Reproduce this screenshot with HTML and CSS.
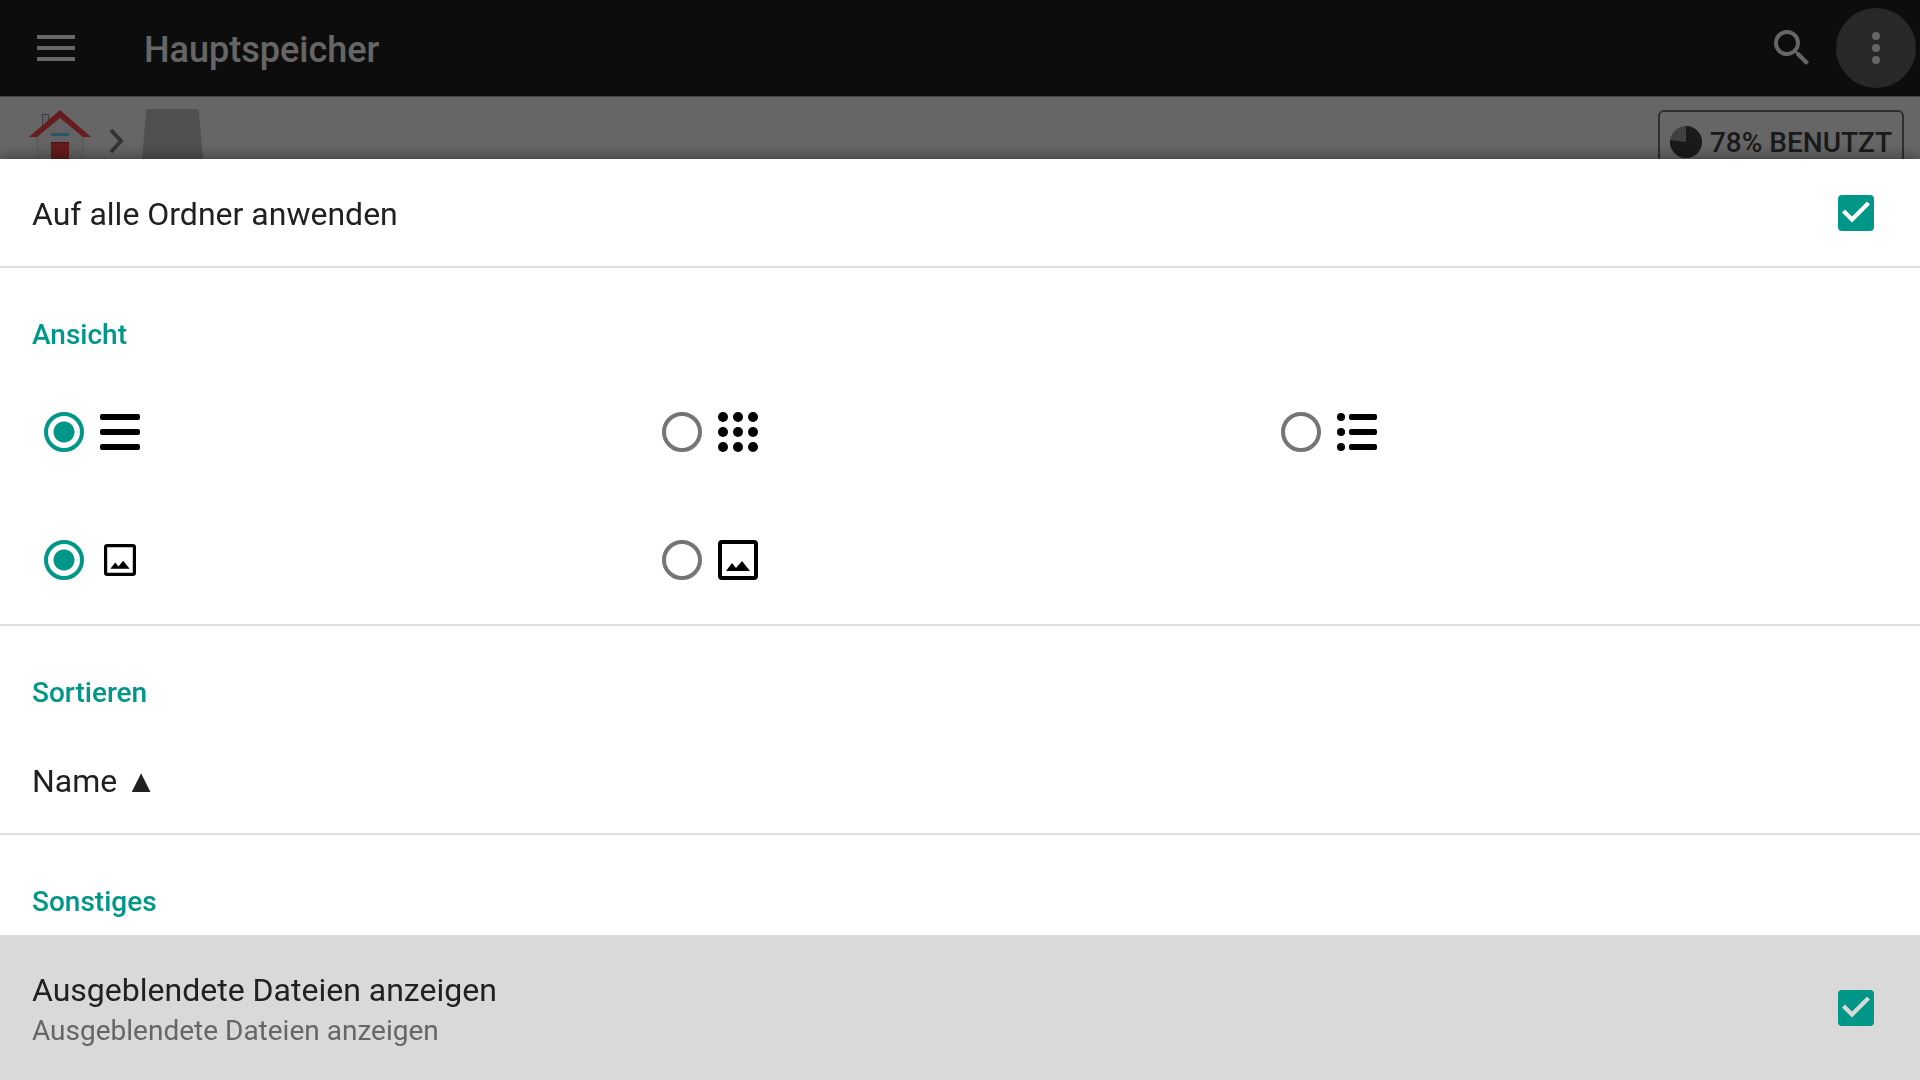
FILE: index.html
```
<!DOCTYPE html>
<html lang="de">
<head>
  <meta charset="utf-8">
  <title>Hauptspeicher</title>
  <link rel="stylesheet" href="styles.css">
</head>
<body>
  <header class="toolbar">
    <button class="icon-button menu-button" type="button" aria-label="Navigation">
      <svg width="38" height="26" viewBox="0 0 38 26"><path d="M0 0h38v4H0zM0 11h38v4H0zM0 22h38v4H0z"/></svg>
    </button>
    <h1>Hauptspeicher</h1>
    <button class="icon-button" type="button" aria-label="Suchen">
      <svg width="48" height="48" viewBox="0 0 24 24"><path d="M15.5 14h-.79l-.28-.27A6.47 6.47 0 0 0 16 9.5 6.5 6.5 0 1 0 9.5 16c1.61 0 3.09-.59 4.23-1.57l.27.28v.79l5 4.99L20.49 19l-4.99-5zm-6 0C7.01 14 5 11.99 5 9.5S7.01 5 9.5 5 14 7.01 14 9.5 11.99 14 9.5 14z"/></svg>
    </button>
    <button class="icon-button more-button" type="button" aria-label="Mehr">
      <svg width="48" height="48" viewBox="0 0 24 24"><circle cx="12" cy="6" r="2"/><circle cx="12" cy="12" r="2"/><circle cx="12" cy="18" r="2"/></svg>
    </button>
  </header>

  <nav class="path-bar">
    <a href="#" class="path-item" aria-label="Start">
      <svg width="64" height="64" viewBox="0 0 64 64">
        <path d="M14.5 20V5.500h6V16" fill="#f0f0f0" stroke="#999" />
        <path d="M9 27L32 8l23 19v37H9z" fill="#f7f7f7" stroke="#e2e2e2"/>
        <path d="M1 28L32 1l31 27h-8L32 9 9 28z" fill="#ff4646"/>
        <path d="M23 24h18v3H23z" fill="#64d8ff"/>
        <path d="M23 33h18v31H23z" fill="#ff4646"/>
        <path d="M23 33h18v1H23z" fill="#a03030"/>
      </svg>
    </a>
    <svg class="chevron" width="16" height="26" viewBox="0 0 16 26"><path d="M2 2l10 11L2 24" fill="none" stroke="#808080" stroke-width="4"/></svg>
    <a href="#" class="path-item" aria-label="Hauptspeicher">
      <svg width="64" height="64" viewBox="0 0 64 64"><path d="M0 64L5 3q0-3 3-3h47q3 0 3 3l5 61z" fill="#c8c8c8"/></svg>
    </a>
    <button class="usage-button" type="button">
      <svg width="32" height="32" viewBox="0 0 32 32"><circle cx="16" cy="16" r="16" fill="#a0a0a0"/><path d="M16 16V0a16 16 0 1 1-15.9 14z" fill="#424242"/></svg>
      78% BENUTZT
    </button>
  </nav>

  <div class="scrim">
    <form class="sheet">
      <label class="row">
        <span class="row-text">Auf alle Ordner anwenden</span>
        <input class="checkbox" type="checkbox" checked>
      </label>

      <section class="section">
        <h2>Ansicht</h2>
        <div class="options">
          <label class="option">
            <input type="radio" name="view" aria-label="Liste" checked>
            <svg width="40" height="40" viewBox="0 0 40 40"><rect y="2" width="40" height="6" rx="2"/><rect y="17" width="40" height="6" rx="2"/><rect y="32" width="40" height="6" rx="2"/></svg>
          </label>
          <label class="option">
            <input type="radio" name="view" aria-label="Raster">
            <svg width="40" height="40" viewBox="0 0 40 40">
              <circle cx="5" cy="5" r="5"/><circle cx="20" cy="5" r="5"/><circle cx="35" cy="5" r="5"/>
              <circle cx="5" cy="20" r="5"/><circle cx="20" cy="20" r="5"/><circle cx="35" cy="20" r="5"/>
              <circle cx="5" cy="35" r="5"/><circle cx="20" cy="35" r="5"/><circle cx="35" cy="35" r="5"/>
            </svg>
          </label>
          <label class="option">
            <input type="radio" name="view" aria-label="Details">
            <svg width="40" height="40" viewBox="0 0 40 40">
              <circle cx="4" cy="5" r="4"/><circle cx="4" cy="20" r="4"/><circle cx="4" cy="35" r="4"/>
              <rect x="12" y="2" width="28" height="6" rx="2"/><rect x="12" y="17" width="28" height="6" rx="2"/><rect x="12" y="32" width="28" height="6" rx="2"/>
            </svg>
          </label>
        </div>
        <div class="options">
          <label class="option">
            <input type="radio" name="size" aria-label="Klein" checked>
            <svg class="small" width="32" height="32" viewBox="0 0 40 40"><rect x="2" y="2" width="36" height="36" rx="2" fill="none" stroke="#000" stroke-width="4"/><path d="M8 31l6-8 4 5 6-7 8 10z"/></svg>
          </label>
          <label class="option">
            <input type="radio" name="size" aria-label="Groß">
            <svg width="40" height="40" viewBox="0 0 40 40"><rect x="2" y="2" width="36" height="36" rx="2" fill="none" stroke="#000" stroke-width="4"/><path d="M8 31l6-8 4 5 6-7 8 10z"/></svg>
          </label>
        </div>
      </section>

      <section class="section">
        <h2>Sortieren</h2>
        <button class="row" type="button">
          <span class="row-text">Name <span class="arrow">▲</span></span>
        </button>
      </section>

      <section class="section">
        <h2>Sonstiges</h2>
        <label class="row selected">
          <span class="row-text">Ausgeblendete Dateien anzeigen
            <small>Ausgeblendete Dateien anzeigen</small>
          </span>
          <input class="checkbox" type="checkbox" checked>
        </label>
      </section>
    </form>
  </div>
</body>
</html>
```
FILE: styles.css
```
* {
  box-sizing: border-box;
}
body {
  margin: 0;
  font-family: Roboto, sans-serif;
  color: #212121;
  background-color: #ffffff;
}
button {
  font-family: inherit;
  color: inherit;
  border: none;
  background: none;
  padding: 0;
  cursor: pointer;
}
svg {
  display: block;
  flex: none;
}

/* Toolbar */
.toolbar {
  display: flex;
  align-items: center;
  height: 96px;
  padding-right: 4px;
  background-color: #212121;
  color: #ffffff;
}
.toolbar h1 {
  flex: 1;
  margin: 0;
  padding-top: 4px;
  font-size: 36px;
  line-height: 44px;
  font-weight: 500;
}
.icon-button {
  display: flex;
  align-items: center;
  justify-content: center;
  width: 80px;
  height: 80px;
  margin-left: 4px;
  border-radius: 50%;
}
.icon-button svg {
  fill: #ffffff;
}
.menu-button {
  width: 112px;
  margin: 0 32px 0 0;
}
.more-button {
  background-color: #646464;
}

/* Path bar below the toolbar */
.path-bar {
  display: flex;
  align-items: flex-start;
  padding: 12px 16px 0 28px;
  border-top: 1px solid #b0b0b0;
}
.chevron {
  margin: 19px 16px 0 17px;
}
.usage-button {
  display: flex;
  align-items: center;
  gap: 8px;
  height: 64px;
  margin-top: 1px;
  margin-left: auto;
  padding: 0 10px;
  border: 2px solid #757575;
  border-radius: 6px;
  font-size: 28px;
  font-weight: 500;
  color: #424242;
}

/* Bottom sheet */
.scrim {
  position: fixed;
  inset: 0;
  display: flex;
  flex-direction: column;
  justify-content: flex-end;
  background-color: rgba(0, 0, 0, 0.6);
}
.sheet {
  background-color: #ffffff;
  box-shadow: 0 0 16px rgba(0, 0, 0, 0.5);
}
.row {
  display: flex;
  align-items: center;
  justify-content: space-between;
  width: 100%;
  padding: 33px 46px 33px 32px;
  text-align: left;
  cursor: pointer;
}
.row-text {
  padding-top: 3px;
  font-size: 32px;
  line-height: 38px;
}
.row-text small {
  display: block;
  margin-top: 6px;
  font-size: 28px;
  line-height: 32px;
  color: #666666;
}
.selected {
  background-color: #d9d9d9;
}
.section {
  border-top: 2px solid #e0e0e0;
}
.section h2 {
  margin: 0;
  padding: 50px 32px 16px;
  font-size: 28px;
  line-height: 34px;
  font-weight: 500;
  color: #009688;
}
.options {
  display: grid;
  grid-template-columns: repeat(3, 1fr);
  padding: 0 33px 0 32px;
}
.option {
  display: flex;
  align-items: center;
  gap: 16px;
  height: 128px;
  padding-left: 12px;
}
.option .small {
  margin: 0 4px;
}
.arrow {
  font-size: 32px;
  line-height: 1;
}

/* Radio and checkbox */
input {
  appearance: none;
  flex: none;
  margin: 0;
}
input[type="radio"] {
  width: 40px;
  height: 40px;
  border: 4px solid #757575;
  border-radius: 50%;
}
input[type="radio"]:checked {
  border-color: #009688;
  background: radial-gradient(circle, #009688 10px, transparent 11px);
}
.checkbox {
  display: grid;
  place-items: center;
  width: 36px;
  height: 36px;
  border-radius: 4px;
  background-color: #009688;
}
.checkbox:checked::before {
  content: "";
  width: 28px;
  height: 22px;
  background-color: #ffffff;
  clip-path: polygon(0 11px, 3px 8px, 10px 15px, 25px 0, 28px 3px, 10px 21px);
}
.selected .checkbox:checked::before {
  background-color: #d9d9d9;
}
```
